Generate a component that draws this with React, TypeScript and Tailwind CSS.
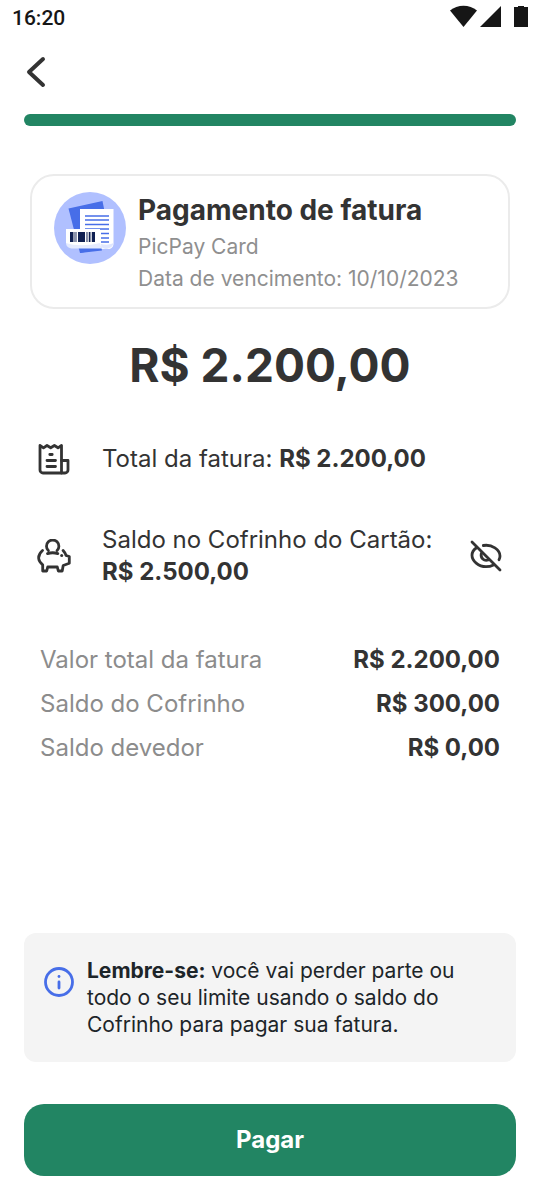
const summary = [
  { label: 'Valor total da fatura', value: 'R$ 2.200,00' },
  { label: 'Saldo do Cofrinho', value: 'R$ 300,00' },
  { label: 'Saldo devedor', value: 'R$ 0,00' },
];

function StatusBar() {
  return (
    <div className="flex h-9 items-center justify-between px-3 font-['Roboto',sans-serif] text-[21px] font-medium text-[#161616]">
      <span className="pt-px">16:20</span>
      <svg width="78" height="22" viewBox="0 0 78 22" fill="#161616" className="mb-1" aria-hidden="true">
        <path d="M0 5.5C7.5-.8 19.5-.8 27 5.5L13.500 22z" />
        <path d="M51 1v21H30z" />
        <path d="M64 2h4V1h6v1h4v20H64z" />
      </svg>
    </div>
  );
}

function BillLogo() {
  return (
    <svg width="72" height="72" viewBox="0 0 72 72" className="shrink-0" aria-hidden="true">
      <circle cx="36" cy="36" r="36" fill="#b0c0ff" />
      <path d="M14.500 16.500L48.500 9l9 45.500L26 61z" fill="#476ee8" />
      <path d="M26 17h33.500v34c0 4-2 6-6 6H26z" fill="#fff" />
      <path d="M26 54h21l1 4.500-22 2.500z" fill="#476ee8" />
      <path d="M47 52c0 3 1.500 4.500 5 5 4-.5 7-2.500 7.500-6-4 2-8 2-12.500 1z" fill="#dfe6ff" />
      <path d="M31 24h24M31 28h24M31 32.500h24M31 37h24M47 41.500h8M47 46h8M47 50h8" stroke="#476ee8" strokeWidth="1.600" />
      <path d="M12 37h34v12c0 3 .5 6 3 7.500H19c-5 0-7-2.500-7-6z" fill="#e5ebff" />
      <path d="M12 37h34v14c-12 3-25 3-34 0z" fill="#fff" />
      <path
        d="M16 40h3v10h-3zM20.500 40h1v10h-1zM24 40h7v10h-7zM32.500 40h1v10h-1zM35 40h1.500v10H35zM38 40h3v10h-3z"
        fill="#102052"
      />
      <path d="M19 40h1.500v10H19zM21.500 40H23v10h-1.500zM33.500 40h1v10h-1zM36.500 40h1v10h-1z" fill="#9299b0" />
    </svg>
  );
}

function InvoiceIcon() {
  return (
    <svg width="32" height="32" viewBox="0 0 32 32" fill="none" stroke="#333" strokeWidth="2.800" strokeLinecap="round" strokeLinejoin="round" className="shrink-0" aria-hidden="true">
      <path d="M2 2.500l3.500 2.300L9 2.500l3.700 2.300 3.700-2.300L20 4.800l3.500-2.300V30H5a3 3 0 0 1-3-3z" />
      <path d="M23.500 17.500H30V27a3 3 0 0 1-3 3h-3.500M11.800 11.500h2.400M9 17.500h8.500M9 23.500h8.500" />
    </svg>
  );
}

function PiggyIcon() {
  return (
    <svg width="34" height="34" viewBox="0 0 34 34" fill="none" stroke="#333" strokeWidth="2.800" strokeLinecap="round" strokeLinejoin="round" className="shrink-0" aria-hidden="true">
      <path d="M5.500 11.500C2.500 14 1.500 17 1.700 19.500c.2 2.500 1.800 4.500 4 6.300V32h4l1-4h9.600l1 4h3.900l1-5.500 6.100-2.300v-6.700l-3.200-1c-.6-2-1.600-3.500-3-5" />
      <path d="M11.300 11.600a6.200 6.200 0 1 1 8.800 0M10.500 14.600c3.300-1.100 7-1.100 10.300 0" />
      <circle cx="24.700" cy="16.500" r="1.500" fill="#333" stroke="none" />
    </svg>
  );
}

function EyeOffIcon() {
  return (
    <svg width="32" height="32" viewBox="0 0 32 32" fill="none" stroke="#333" strokeWidth="2.800" strokeLinecap="round" strokeLinejoin="round" aria-hidden="true">
      <path d="M2 2l28 28" />
      <path d="M6.200 8C3.300 10 2 12.500 2 15.300 2 21 8.500 26.700 16 26.700c3 0 5.500-.7 7.500-1.700" />
      <path d="M13.300 5.500C22 4 30 9.700 30 16c0 1.300-.3 2.500-1 3.700" />
      <path d="M11.300 13.500c-1 4.500 2.700 8 7 6.500" />
    </svg>
  );
}

export default function App() {
  return (
    <div className="flex min-h-screen flex-col bg-white font-['Inter',sans-serif] text-[#333]">
      <StatusBar />

      <main className="flex flex-1 flex-col px-6 pb-6">
        <header>
          <button type="button" aria-label="Voltar" className="mt-5 block">
            <svg width="24" height="32" viewBox="0 0 24 32" fill="none" stroke="#333" strokeWidth="4" strokeLinecap="round" strokeLinejoin="round">
              <path d="M19 3L5 16l14 13" />
            </svg>
          </button>
          <div role="progressbar" aria-label="Progresso" aria-valuenow={100} className="mt-[26px] h-3 rounded-full bg-[#228563]" />
        </header>

        {/* Invoice card */}
        <section className="mx-[6px] mt-12 flex rounded-3xl border-2 border-[#ebebeb] px-[22px] pb-3 pt-4">
          <BillLogo />
          <div className="ml-3">
            <h1 className="mb-[3px] text-[28px] font-bold leading-9">Pagamento de fatura</h1>
            <p className="text-[21px] leading-8 text-[#8f8f8f]">PicPay Card</p>
            <p className="text-[21px] leading-8 text-[#8f8f8f]">Data de vencimento: 10/10/2023</p>
          </div>
        </section>

        <p className="mt-7 text-center text-[46px] font-bold leading-[56px]">R$ 2.200,00</p>

        <div className="mt-[50px] flex items-center px-[14px] text-2xl leading-8">
          <InvoiceIcon />
          <p className="ml-8">
            Total da fatura: <strong>R$ 2.200,00</strong>
          </p>
        </div>

        <div className="mt-[49px] flex items-center pl-[13px] pr-[14px] text-2xl leading-8">
          <PiggyIcon />
          <p className="ml-[31px] flex-1">
            Saldo no Cofrinho do Cartão:
            <br />
            <strong>R$ 2.500,00</strong>
          </p>
          <button type="button" aria-label="Ocultar saldo">
            <EyeOffIcon />
          </button>
        </div>

        <dl className="mb-8 mt-14 flex flex-col gap-3 px-4 text-2xl leading-8">
          {summary.map((item) => (
            <div key={item.label} className="flex justify-between">
              <dt className="text-[#8c8c8c]">{item.label}</dt>
              <dd className="font-bold">{item.value}</dd>
            </div>
          ))}
        </dl>

        {/* Reminder */}
        <aside className="mt-auto flex rounded-xl bg-[#f4f4f4] px-5 py-6 text-[#1d2529]">
          <svg width="30" height="30" viewBox="0 0 30 30" fill="none" stroke="#476ee8" strokeWidth="2.800" strokeLinecap="round" className="mt-[10px] shrink-0" aria-hidden="true">
            <circle cx="15" cy="15" r="13.500" />
            <path d="M15 15v6" />
            <path d="M15 9.500v.1" />
          </svg>
          <p className="ml-[13px] max-w-[380px] text-[21px] leading-[27px]">
            <strong>Lembre-se:</strong> você vai perder parte ou todo o seu limite usando o saldo do Cofrinho para pagar sua fatura.
          </p>
        </aside>

        <button type="button" className="mt-[42px] h-[72px] rounded-[20px] bg-[#228563] text-2xl font-bold text-white">
          Pagar
        </button>
      </main>
    </div>
  );
}
